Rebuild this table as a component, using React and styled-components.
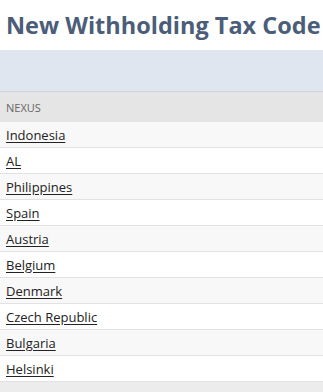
import React from "react";
import styled, { createGlobalStyle } from "styled-components";

const Global = createGlobalStyle`
  html, body { margin: 0; padding: 0; background: #fff; }
  body { font-family: "Open Sans", "Liberation Sans", sans-serif; }
`;

const Page = styled.div`
  width: 323px;
  height: 392px;
  overflow: hidden;
  display: flex;
  flex-direction: column;
`;

const Title = styled.h1`
  margin: 0;
  padding: 9px 0 0 6px;
  height: 50px;
  box-sizing: border-box;
  font-size: 23.5px;
  font-weight: 700;
  color: #4b5d78;
  white-space: nowrap;
  line-height: 32px;
`;

const Band = styled.div`
  height: 42px;
  background: #e0e6ef;
  border-bottom: 1px solid #cfd3d8;
  box-sizing: border-box;
`;

const HeaderRow = styled.div`
  height: 30px;
  display: flex;
  align-items: center;
  padding-left: 6px;
  background: #e5e5e5;
  font-size: 11px;
  color: #666;
  text-transform: uppercase;
`;

const Row = styled.div`
  height: 26px;
  box-sizing: border-box;
  display: flex;
  align-items: center;
  padding-left: 6px;
  background: ${(p) => (p.$alt ? "#f8f8f8" : "#fff")};
  border-bottom: 1px solid #e2e2e2;
`;

const Link = styled.a`
  font-size: 13px;
  color: #222;
  text-decoration: underline;
  text-underline-offset: 2px;
`;

const Footer = styled.div`
  flex: 1;
  background: #ececec;
`;

const items = [
  "Indonesia",
  "AL",
  "Philippines",
  "Spain",
  "Austria",
  "Belgium",
  "Denmark",
  "Czech Republic",
  "Bulgaria",
  "Helsinki",
];

export default function App() {
  return (
    <Page>
      <Global />
      <Title>New Withholding Tax Code</Title>
      <Band />
      <HeaderRow>Nexus</HeaderRow>
      {items.map((it, i) => (
        <Row key={it} $alt={i % 2 === 0}>
          <Link href="#">{it}</Link>
        </Row>
      ))}
      <Footer />
    </Page>
  );
}
